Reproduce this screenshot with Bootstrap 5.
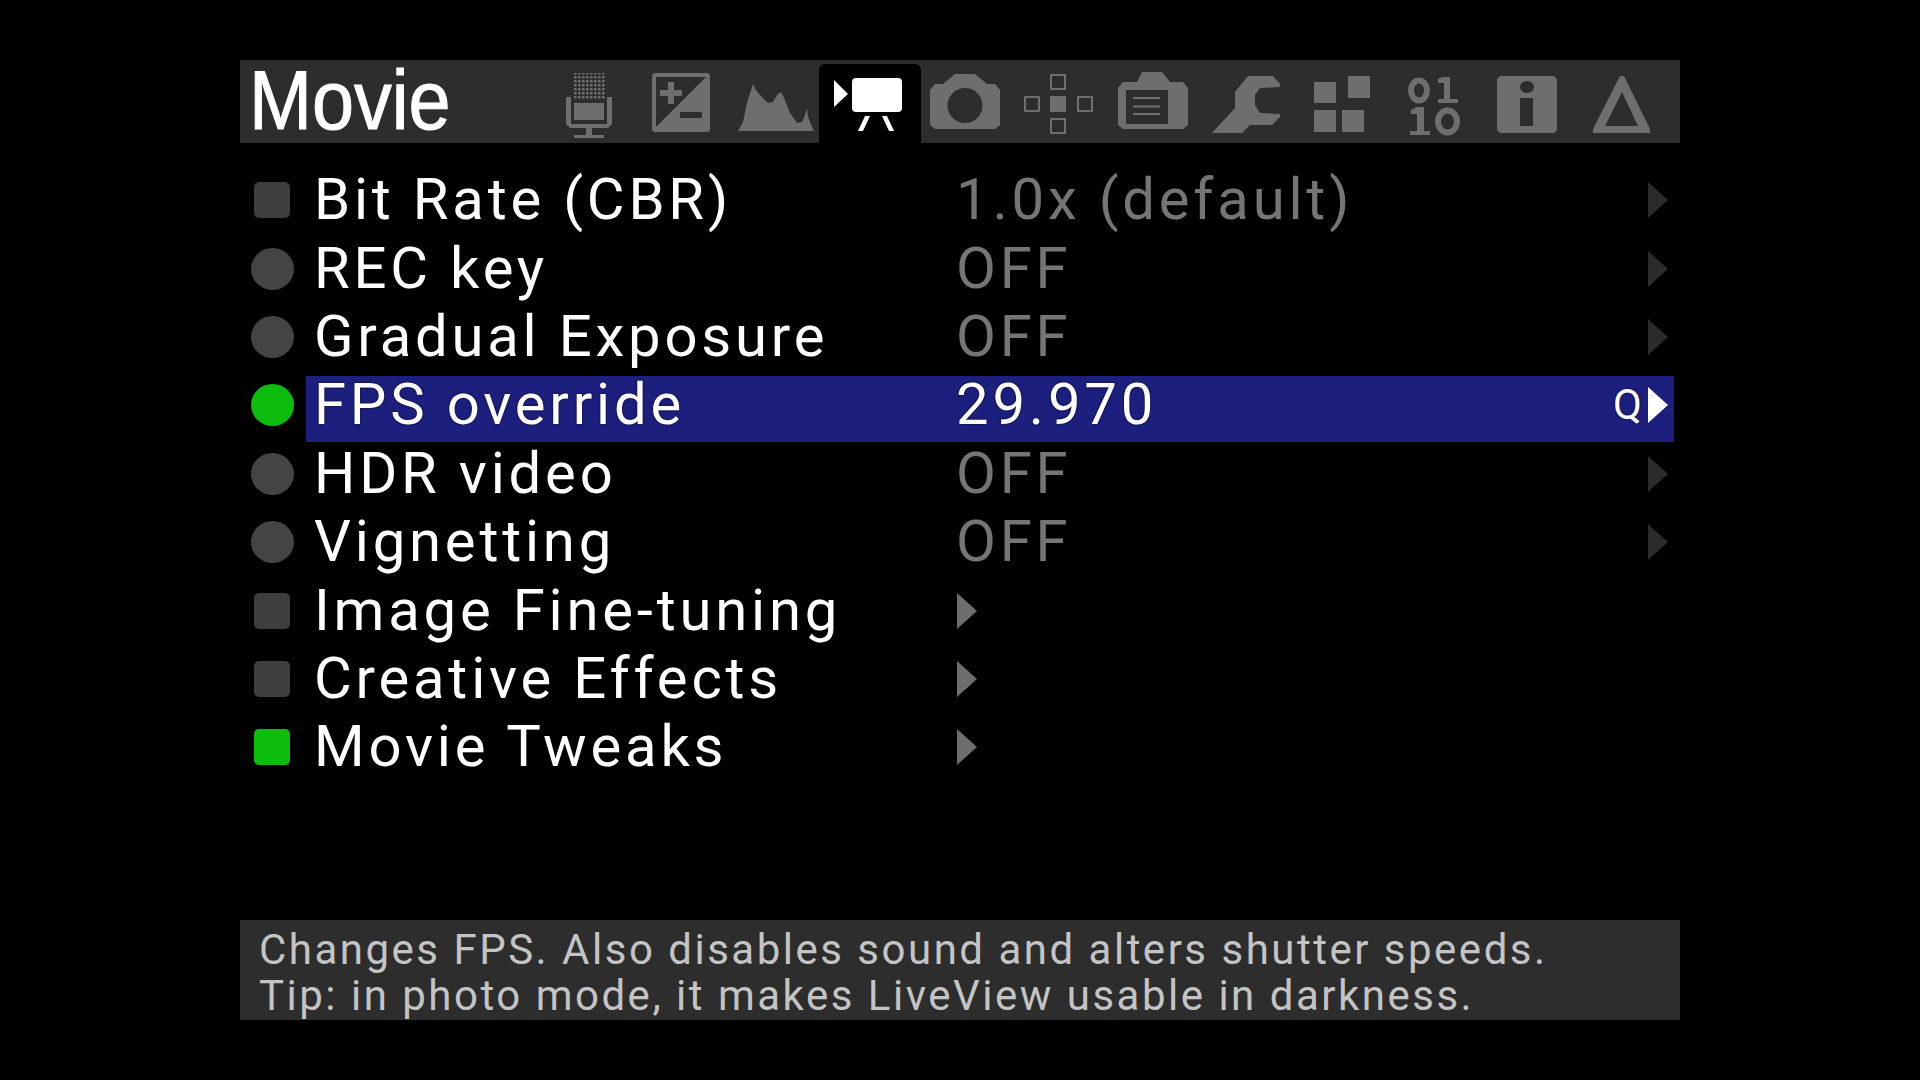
<!DOCTYPE html>
<html lang="en">
<head>
  <meta charset="UTF-8">
  <title>Movie menu</title>
  <link href="https://cdn.jsdelivr.net/npm/bootstrap@5.3.0/dist/css/bootstrap.min.css" rel="stylesheet">
  <style>
    body {
      background-color: #000;
      font-family: Roboto, sans-serif;
      color: #fff;
      margin: 0;
      height: 1080px;
      overflow: hidden;
    }
    .cam-screen {
      width: 1440px;
      margin-left: 240px;
      padding-top: 60px;
    }
    .top-bar {
      height: 83px;
      background-color: #2d2d2d;
    }
    .top-title {
      width: 302px;
      padding-left: 10px;
      font-family: "Liberation Sans", sans-serif;
      font-size: 84px;
      line-height: 80px;
      -webkit-text-stroke: 1px #fff;
      transform: scaleX(.9);
      transform-origin: left;
    }
    .tab-cell {
      width: 94px;
      height: 83px;
      flex: none;
    }
    .tab-cell svg {
      display: block;
      fill: #6e6e6e;
    }
    .tab-on {
      background-color: #000;
      border-radius: 6px 6px 0 0;
      height: 79px;
      margin-top: 4px;
      width: 102px;
      margin-left: -5px;
      margin-right: -3px;
    }
    .tab-on svg {
      fill: #fff;
      margin-top: -4px;
      margin-left: 5px;
    }
    .menu-list {
      padding-top: 23px;
      height: 777px;
    }
    .menu-row {
      height: 68.4px;
      align-items: center;
      font-size: 58px;
      line-height: 68px;
      letter-spacing: 3.8px;
    }
    .row-on {
      background-color: #1c1f7e;
      margin-top: 8px;
      padding-bottom: 8px;
      text-shadow: 0 0 2px #000;
    }
    .row-dot {
      width: 66px;
      flex: none;
      padding-left: 11px;
    }
    .dot-sq {
      display: block;
      width: 36px;
      height: 36px;
      margin-left: 3px;
      border-radius: 5px;
      background-color: #3e3e3e;
    }
    .dot-round {
      display: block;
      width: 43px;
      height: 42px;
      border-radius: 50%;
      background-color: #444;
    }
    .dot-green {
      background-color: #0dbd0d;
    }
    .row-body {
      flex-grow: 1;
      height: 66px;
      margin-right: 6px;
      padding-left: 8px;
      align-items: center;
    }
    .row-name {
      width: 642px;
      flex: none;
      margin-top: -2px;
    }
    .row-val {
      color: #757575;
      flex-grow: 1;
      margin-top: -2px;
    }
    .row-on .row-val {
      color: #fff;
    }
    .arrow-end {
      width: 0;
      height: 0;
      border-left: 20px solid #2b2b2b;
      border-top: 18px solid transparent;
      border-bottom: 18px solid transparent;
      margin-right: 6px;
    }
    .row-on .arrow-end {
      border-left-color: #fff;
    }
    .arrow-sub {
      width: 0;
      height: 0;
      border-left: 20px solid #6e6e6e;
      border-top: 18px solid transparent;
      border-bottom: 18px solid transparent;
      margin-left: 1px;
    }
    .q-key {
      font-size: 42px;
      letter-spacing: 0;
      margin-right: 6px;
    }
    .help-bar {
      height: 100px;
      background-color: #2d2d2d;
      color: #c4c4c4;
      font-size: 42px;
      line-height: 46px;
      letter-spacing: 2.5px;
      padding: 7px 0 0 19px;
      white-space: nowrap;
    }
  </style>
</head>
<body>
  <div class="cam-screen">
    <div class="top-bar d-flex">
      <div class="top-title">Movie</div>

      <!-- audio -->
      <div class="tab-cell">
        <svg width="94" height="83" viewBox="0 0 94 83">
          <defs>
            <pattern id="micdots" width="4" height="4" patternUnits="userSpaceOnUse">
              <rect width="2.5" height="2.5"/>
            </pattern>
          </defs>
          <rect x="31" y="13" width="32" height="27" fill="url(#micdots)"/>
          <rect x="32" y="43" width="30" height="17"/>
          <path d="M24 37h5v27h36V37h5v27l-4 4H50v7h12v3H32v-3h12v-7H28l-4-4z"/>
        </svg>
      </div>
      <!-- exposure -->
      <div class="tab-cell">
        <svg width="94" height="83" viewBox="0 0 94 83">
          <path fill-rule="evenodd" d="M18 13h54l2 2v55l-2 2H18l-2-2V15zM20 17v50l50-50zM32 22h6v8h8v6h-8v8h-6v-8h-8v-6h8zM44 52h22v6H44z"/>
        </svg>
      </div>
      <!-- histogram -->
      <div class="tab-cell">
        <svg width="94" height="83" viewBox="0 0 94 83">
          <path d="M8 71l5-9 4-19 3-10 3-9 3 6 4 5 8 8 5-1 4-7 4-3 4 8 5 13 7 10 5-1 3-7 2-7 1 9 4 10 2 4z"/>
        </svg>
      </div>
      <!-- movie, active -->
      <div class="tab-cell tab-on">
        <svg width="94" height="83" viewBox="0 0 94 83">
          <path d="M10 20l14 14-14 13z"/>
          <rect x="28" y="18" width="50" height="34" rx="4"/>
          <path d="M41 56h5l-7 15h-5z"/>
          <path d="M58 56h5l7 15h-5z"/>
        </svg>
      </div>
      <!-- shoot -->
      <div class="tab-cell">
        <svg width="94" height="83" viewBox="0 0 94 83">
          <path fill-rule="evenodd" d="M37 14h20l12 10h8l5 6v35l-5 4H17l-5-4V30l5-6h8zM47 28a17.500 17.500 0 1 0 .01 0z"/>
        </svg>
      </div>
      <!-- focus -->
      <div class="tab-cell">
        <svg width="94" height="83" viewBox="0 0 94 83">
          <g fill="none" stroke="#6e6e6e" stroke-width="2">
            <rect x="39" y="15" width="14" height="14"/>
            <rect x="13" y="37" width="14" height="14"/>
            <rect x="66" y="37" width="14" height="14"/>
            <rect x="39" y="59" width="14" height="14"/>
          </g>
          <rect x="38" y="36" width="16" height="16"/>
        </svg>
      </div>
      <!-- display -->
      <div class="tab-cell">
        <svg width="94" height="83" viewBox="0 0 94 83">
          <path fill-rule="evenodd" d="M36 12h20l8 10h13l5 6v37l-5 4H17l-5-4V28l5-6h14zM20 30v34h42V30zM27 37h27v2H27zM27 45.500h27v2H27zM27 53h27v2H27z"/>
        </svg>
      </div>
      <!-- prefs -->
      <div class="tab-cell">
        <svg width="94" height="83" viewBox="0 0 94 83">
          <path d="M48 16h25l7 8v3l-20 1-5 7v10l5 8 20 1v3l-8 8H50l-8 8H12l23-25V32z"/>
        </svg>
      </div>
      <!-- modules -->
      <div class="tab-cell">
        <svg width="94" height="83" viewBox="0 0 94 83">
          <rect x="20" y="22" width="22" height="21"/>
          <rect x="54" y="16" width="22" height="22"/>
          <rect x="20" y="50" width="22" height="22"/>
          <rect x="48" y="50" width="22" height="22"/>
        </svg>
      </div>
      <!-- debug -->
      <div class="tab-cell">
        <svg width="94" height="83" viewBox="0 0 94 83">
          <ellipse cx="31" cy="30.500" rx="8" ry="10" fill="none" stroke="#6e6e6e" stroke-width="6"/>
          <path d="M50 19l5-2h7v22h8v4H50v-4h6V23h-6z"/>
          <path d="M23 50l6-3h7v24h6v4H22v-4h7V54h-6z"/>
          <ellipse cx="59.500" cy="61.500" rx="9.500" ry="11" fill="none" stroke="#6e6e6e" stroke-width="6"/>
        </svg>
      </div>
      <!-- info -->
      <div class="tab-cell">
        <svg width="94" height="83" viewBox="0 0 94 83">
          <path fill-rule="evenodd" d="M18 16h54l3 3v51l-3 3H18l-3-3V19zM45 21c-4 0-7 3-7 6s3 6 7 6 7-3 7-6-3-6-7-6zM38 38v28h13V38z"/>
        </svg>
      </div>
      <!-- delta -->
      <div class="tab-cell">
        <svg width="94" height="83" viewBox="0 0 94 83">
          <path fill-rule="evenodd" d="M44 16h4l26 53v4H17v-4zM46 32L29 66h33z"/>
        </svg>
      </div>
    </div>

    <div class="menu-list">
      <div class="menu-row d-flex">
        <div class="row-dot"><span class="dot-sq"></span></div>
        <div class="row-body d-flex"><div class="row-name">Bit Rate (CBR)</div><div class="row-val">1.0x (default)</div><div class="arrow-end"></div></div>
      </div>
      <div class="menu-row d-flex">
        <div class="row-dot"><span class="dot-round"></span></div>
        <div class="row-body d-flex"><div class="row-name">REC key</div><div class="row-val">OFF</div><div class="arrow-end"></div></div>
      </div>
      <div class="menu-row d-flex">
        <div class="row-dot"><span class="dot-round"></span></div>
        <div class="row-body d-flex"><div class="row-name">Gradual Exposure</div><div class="row-val">OFF</div><div class="arrow-end"></div></div>
      </div>
      <div class="menu-row d-flex">
        <div class="row-dot"><span class="dot-round dot-green"></span></div>
        <div class="row-body row-on d-flex"><div class="row-name">FPS override</div><div class="row-val">29.970</div><span class="q-key">Q</span><div class="arrow-end"></div></div>
      </div>
      <div class="menu-row d-flex">
        <div class="row-dot"><span class="dot-round"></span></div>
        <div class="row-body d-flex"><div class="row-name">HDR video</div><div class="row-val">OFF</div><div class="arrow-end"></div></div>
      </div>
      <div class="menu-row d-flex">
        <div class="row-dot"><span class="dot-round"></span></div>
        <div class="row-body d-flex"><div class="row-name">Vignetting</div><div class="row-val">OFF</div><div class="arrow-end"></div></div>
      </div>
      <div class="menu-row d-flex">
        <div class="row-dot"><span class="dot-sq"></span></div>
        <div class="row-body d-flex"><div class="row-name">Image Fine-tuning</div><div class="arrow-sub"></div></div>
      </div>
      <div class="menu-row d-flex">
        <div class="row-dot"><span class="dot-sq"></span></div>
        <div class="row-body d-flex"><div class="row-name">Creative Effects</div><div class="arrow-sub"></div></div>
      </div>
      <div class="menu-row d-flex">
        <div class="row-dot"><span class="dot-sq dot-green"></span></div>
        <div class="row-body d-flex"><div class="row-name">Movie Tweaks</div><div class="arrow-sub"></div></div>
      </div>
    </div>

    <div class="help-bar">
      <div>Changes FPS. Also disables sound and alters shutter speeds.</div>
      <div>Tip: in photo mode, it makes LiveView usable in darkness.</div>
    </div>
  </div>
</body>
</html>
